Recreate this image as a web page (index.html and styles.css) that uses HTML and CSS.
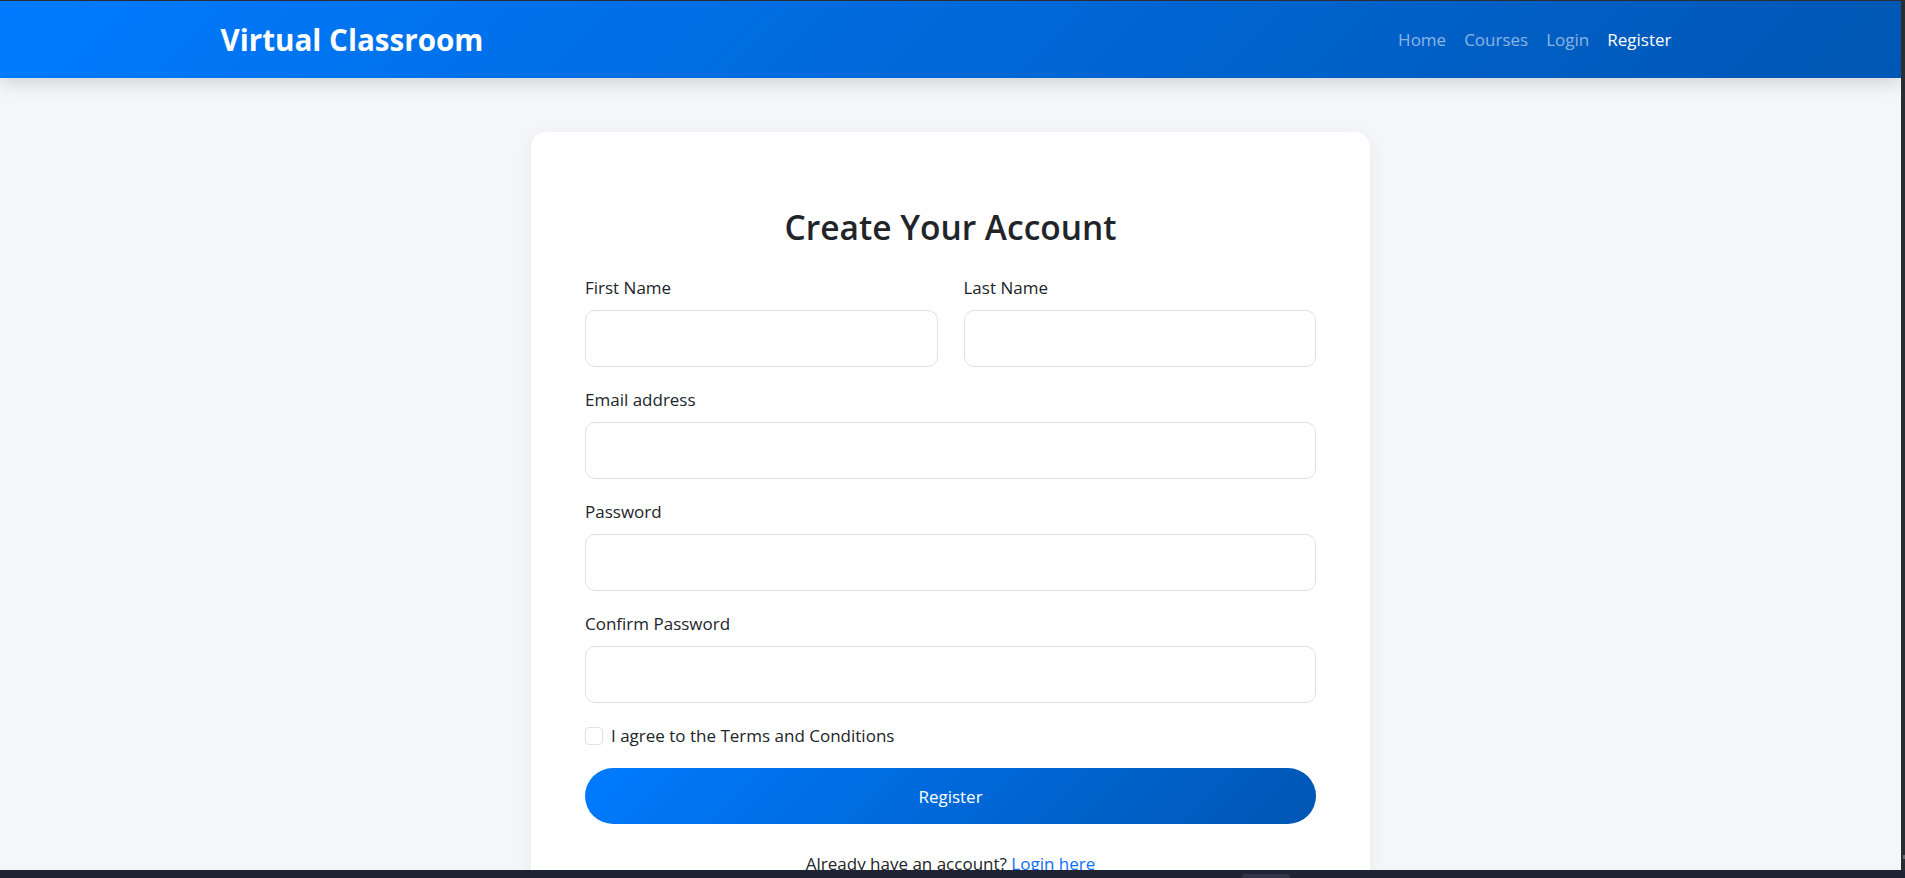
FILE: index.html
```html
<!DOCTYPE html>
<html lang="en">
<head>
  <meta charset="UTF-8">
  <meta name="viewport" content="width=device-width, initial-scale=1.0">
  <title>Register - Virtual Classroom</title>
  <link rel="stylesheet" href="styles.css">
</head>
<body>

  <div class="page">
    <nav class="navbar">
      <div class="nav-inner">
        <a href="#" class="brand">Virtual Classroom</a>
        <ul class="nav-links">
          <li><a href="#">Home</a></li>
          <li><a href="#">Courses</a></li>
          <li><a href="#">Login</a></li>
          <li><a href="#" class="active">Register</a></li>
        </ul>
      </div>
    </nav>

    <div class="card">
      <h2>Create Your Account</h2>
      <form id="registerForm">
        <div class="row">
          <div class="field">
            <label for="firstName">First Name</label>
            <input type="text" id="firstName" name="firstName" required>
          </div>
          <div class="field">
            <label for="lastName">Last Name</label>
            <input type="text" id="lastName" name="lastName" required>
          </div>
        </div>

        <div class="field">
          <label for="email">Email address</label>
          <input type="email" id="email" name="email" required>
        </div>

        <div class="field">
          <label for="password">Password</label>
          <input type="password" id="password" name="password" required>
        </div>

        <div class="field">
          <label for="confirmPassword">Confirm Password</label>
          <input type="password" id="confirmPassword" name="confirmPassword" required>
        </div>

        <div class="check">
          <input type="checkbox" id="terms" name="terms">
          <label for="terms">I agree to the Terms and Conditions</label>
        </div>

        <button type="submit" class="btn-register">Register</button>
      </form>

      <p class="login-text">Already have an account? <a href="#">Login here</a></p>
    </div>
  </div>

  <!-- window frame around the page -->
  <div class="frame-right"><span class="frame-thumb"></span></div>
  <div class="frame-bottom"><span class="frame-tab"></span></div>

</body>
</html>
```

FILE: styles.css
```css
html, body {
  height: 100%;
  overflow: hidden;
}

body {
  font-family: "Open Sans", "Noto Sans", sans-serif;
  margin: 0;
  padding: 0;
  background-color: #f4f6f9;
  color: #212529;
  border-top: 1px solid #2b2d33;
}

.page {
  margin-right: 4px;
}

/* navbar */
.navbar {
  height: 77px;
  background: linear-gradient(135deg, #007bff, #0056b3);
  box-shadow: 0 4px 18px rgba(0, 0, 0, 0.16);
  display: flex;
  align-items: center;
}

.nav-inner {
  width: 1460px;
  margin: 0 auto;
  display: flex;
  align-items: center;
  justify-content: space-between;
}

.brand {
  color: #fff;
  font-size: 29.6px;
  font-weight: 700;
  text-decoration: none;
}

.nav-links {
  list-style-type: none;
  margin: 0;
  padding: 0;
  display: flex;
}

.nav-links a {
  display: block;
  padding: 8px 9px;
  font-size: 17px;
  color: rgba(255, 255, 255, 0.55);
  text-decoration: none;
}

.nav-links a.active {
  color: #fff;
}

/* card */
.card {
  width: 839px;
  box-sizing: border-box;
  margin: 54px auto 0;
  padding: 54px;
  background-color: #fff;
  border-radius: 15px;
  box-shadow: 0 4px 20px rgba(0, 0, 0, 0.05);
}

.card h2 {
  margin: 21px 0 27px;
  text-align: center;
  font-size: 33.5px;
  font-weight: 600;
  line-height: 1.2;
}

form {
  display: flex;
  flex-direction: column;
}

.row {
  display: flex;
  gap: 26px;
}

.row .field {
  flex: 1;
}

.field {
  display: flex;
  flex-direction: column;
  margin-bottom: 19px;
}

.field label {
  font-size: 17px;
  line-height: 27px;
  margin-bottom: 9px;
}

.field input {
  height: 57px;
  box-sizing: border-box;
  padding: 0 16px;
  border: 1px solid #dfe1e7;
  border-radius: 10px;
  font-size: 17px;
  font-family: inherit;
}

.check {
  display: flex;
  align-items: center;
  gap: 8px;
  height: 27px;
  margin-bottom: 19px;
}

.check input {
  appearance: none;
  width: 18px;
  height: 18px;
  margin: 0;
  border: 1px solid #dfe1e7;
  border-radius: 4px;
  background: #fff;
}

.check label {
  font-size: 17px;
}

.btn-register {
  height: 56px;
  border: none;
  border-radius: 28px;
  background: linear-gradient(135deg, #007bff, #0056b3);
  color: #fff;
  font-size: 17px;
  font-family: inherit;
  cursor: pointer;
}

.login-text {
  margin: 26px 0 0;
  text-align: center;
  font-size: 17px;
  line-height: 27px;
}

.login-text a {
  color: #0d6efd;
  text-decoration: none;
}

/* window frame */
.frame-right {
  position: fixed;
  top: 0;
  right: 0;
  width: 4px;
  height: 100%;
  background-color: #2b2d33;
}

.frame-thumb {
  position: absolute;
  top: 855px;
  left: 2px;
  width: 2px;
  height: 4px;
  background-color: #6b6e75;
}

.frame-bottom {
  position: fixed;
  left: 0;
  bottom: 0;
  width: 100%;
  height: 8px;
  background-color: #1f2333;
}

.frame-tab {
  position: absolute;
  top: 4px;
  left: 1242px;
  width: 48px;
  height: 6px;
  border-radius: 3px;
  background-color: #2f3446;
}
```
